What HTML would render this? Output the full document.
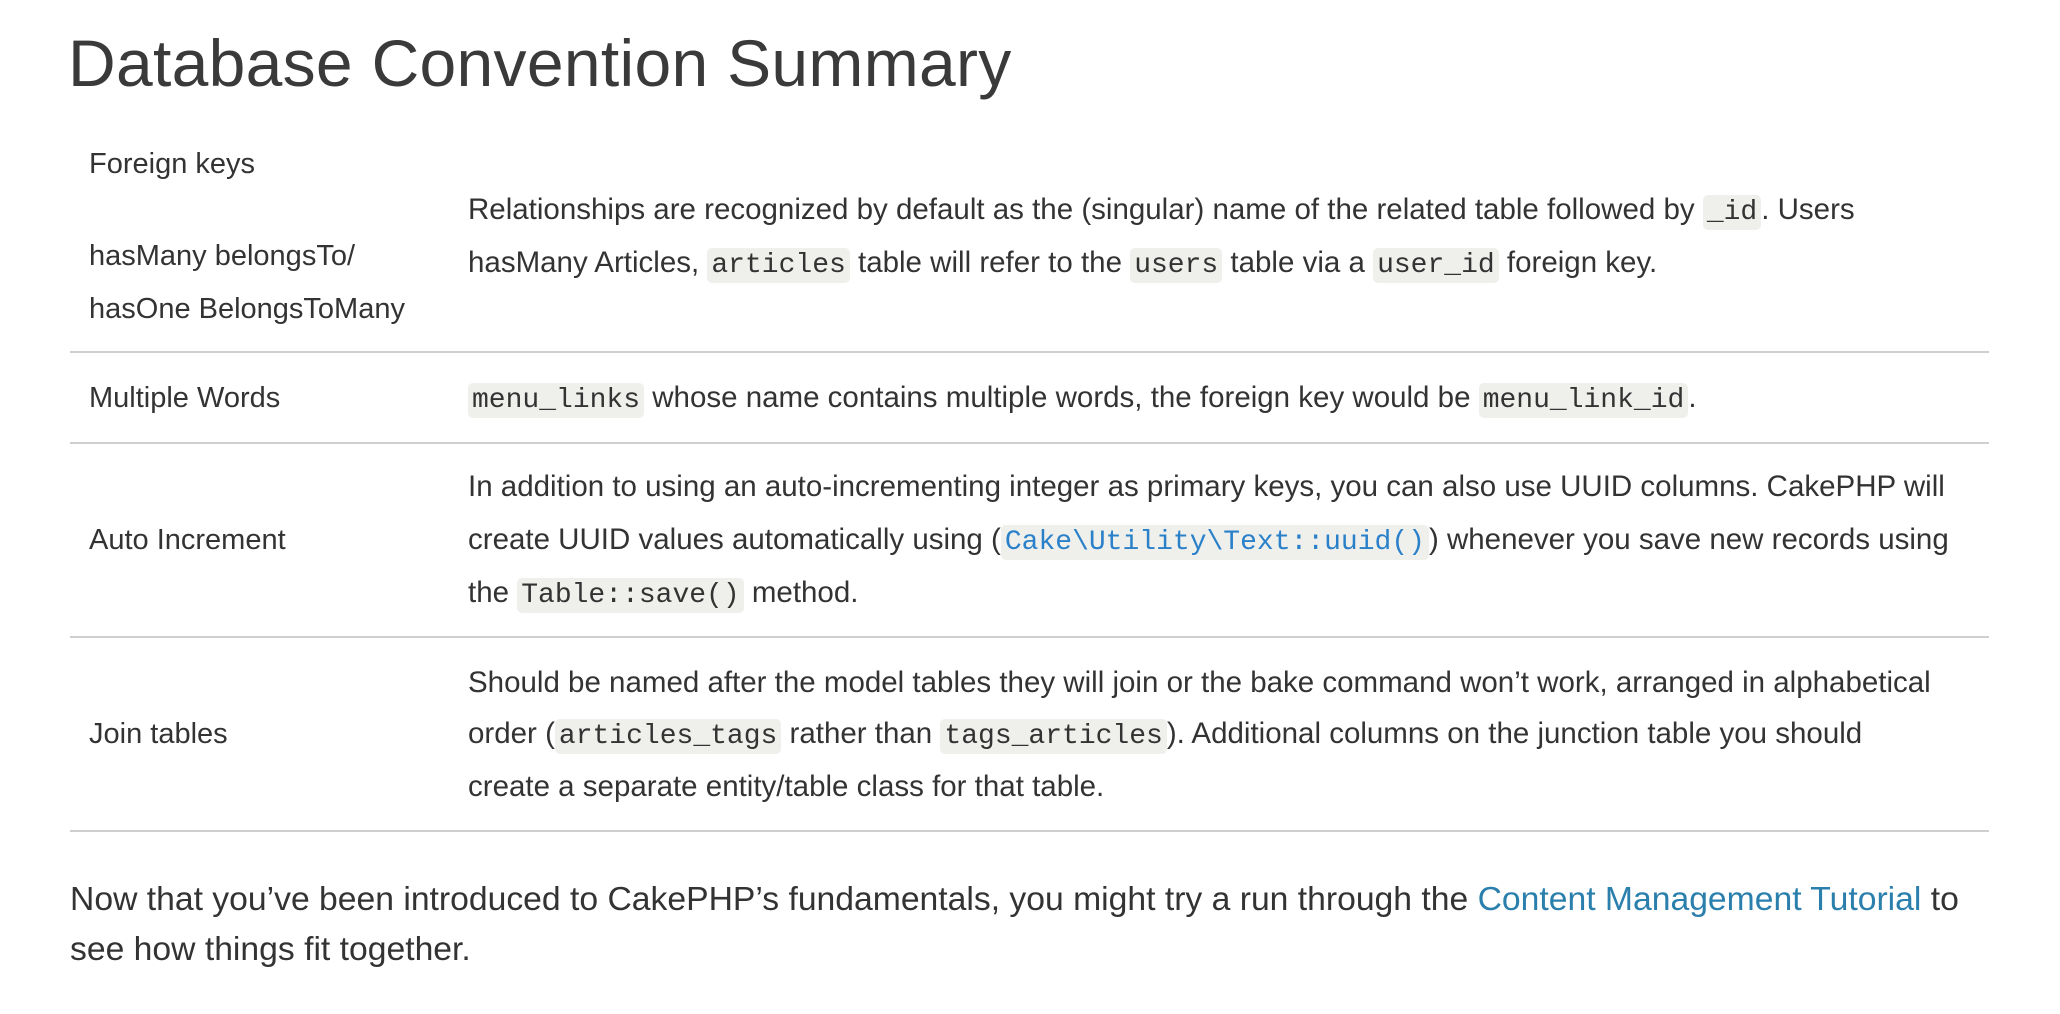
<!DOCTYPE html>
<html><head><meta charset="utf-8"><style>
body{margin:0;width:2060px;height:1014px;background:#fff;color:#333;font-family:"Liberation Sans",sans-serif;position:relative;overflow:hidden}
.a{position:absolute;white-space:nowrap;font-size:29.5px;line-height:34px}
.c1{font-size:29px}
h1{position:absolute;left:68px;top:18px;margin:0;font-weight:normal;font-size:66px;line-height:90px;color:#3a3a3a;letter-spacing:0.3px}
.hr{position:absolute;left:70px;width:1919px;height:2px;background:#cfcfcf}
code{font-family:"Liberation Mono",monospace;background:#efefec;border-radius:5px;padding:2px 4px;font-size:28px}
.l{color:#2a80c9}
.p{font-size:33.7px;line-height:38px}
.p a{color:#2a7fac;text-decoration:none}
</style></head><body>
<h1>Database Convention Summary</h1>

<div class="a c1" style="left:89px;top:147px">Foreign keys</div>
<div class="a c1" style="left:89px;top:239px">hasMany belongsTo/</div>
<div class="a c1" style="left:89px;top:292px">hasOne BelongsToMany</div>
<div class="a" style="left:468px;top:193px">Relationships are recognized by default as the (singular) name of the related table followed by <code>_id</code>. Users</div>
<div class="a" style="left:468px;top:246px">hasMany Articles, <code>articles</code> table will refer to the <code>users</code> table via a <code>user_id</code> foreign key.</div>
<div class="hr" style="top:351px"></div>

<div class="a c1" style="left:89px;top:381px">Multiple Words</div>
<div class="a" style="left:468px;top:381px"><code>menu_links</code> whose name contains multiple words, the foreign key would be <code>menu_link_id</code>.</div>
<div class="hr" style="top:442px"></div>

<div class="a" style="left:468px;top:470px">In addition to using an auto-incrementing integer as primary keys, you can also use UUID columns. CakePHP will</div>
<div class="a c1" style="left:89px;top:523px">Auto Increment</div>
<div class="a" style="left:468px;top:523px">create UUID values automatically using (<code class="l">Cake\Utility\Text::uuid()</code>) whenever you save new records using</div>
<div class="a" style="left:468px;top:576px">the <code>Table::save()</code> method.</div>
<div class="hr" style="top:636px"></div>

<div class="a" style="left:468px;top:666px">Should be named after the model tables they will join or the bake command won’t work, arranged in alphabetical</div>
<div class="a c1" style="left:89px;top:717px">Join tables</div>
<div class="a" style="left:468px;top:717px">order (<code>articles_tags</code> rather than <code>tags_articles</code>). Additional columns on the junction table you should</div>
<div class="a" style="left:468px;top:770px">create a separate entity/table class for that table.</div>
<div class="hr" style="top:830px"></div>

<div class="a p" style="left:70px;top:880px">Now that you’ve been introduced to CakePHP’s fundamentals, you might try a run through the <a>Content Management Tutorial</a> to</div>
<div class="a p" style="left:70px;top:930px">see how things fit together.</div>
</body></html>
